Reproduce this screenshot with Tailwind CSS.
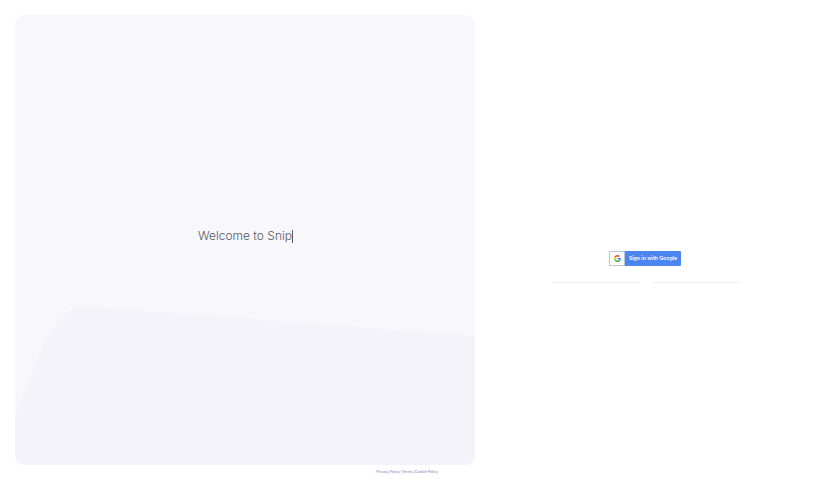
<!DOCTYPE html>
<html lang="en">
<head>
  <meta charset="UTF-8" />
  <meta name="viewport" content="width=device-width, initial-scale=1.0" />
  <title>Snip</title>
  <script src="https://cdn.jsdelivr.net/npm/@tailwindcss/browser@4"></script>
</head>
<body class="bg-white font-['Inter',sans-serif] overflow-hidden">
  <div class="flex h-[480px] w-[815px]">
    <!-- left panel -->
    <div class="w-[475px] shrink-0 pl-[15px] pt-[15px]">
      <div class="relative h-[450px] w-[460px] overflow-hidden rounded-[9px] bg-[#f8f8fc]">
        <svg class="absolute inset-0" width="460" height="450" viewBox="0 0 460 450" fill="none">
          <path d="M0 402 C10 375 20 348 28 332 C35 318 42 307 50 299 C57 292 66 291 78 292 L460 321 L460 450 L0 450 Z" fill="#f3f3f9" />
        </svg>
        <div class="relative flex h-full items-start pl-[183px] pt-[214px]">
          <span class="text-[12px] font-light leading-[14px] text-[#565761]">Welcome to Snip</span>
          <span class="mt-px h-[13px] w-px bg-[#565761]"></span>
        </div>
      </div>
      <div class="mt-[5px] flex justify-end gap-[1px] pr-[37px] text-[3.6px] leading-[5px] text-[#7c7db5]">
        <a href="#">Privacy Policy</a>
        <a href="#">|Terms</a>
        <a href="#">|Cookie Policy</a>
      </div>
    </div>

    <!-- right panel -->
    <div class="flex flex-1 flex-col items-center pt-[251px]">
      <button type="button" class="flex h-[15px] w-[72px] items-center rounded-[1px] bg-[#4a86f0]">
        <span class="flex h-[15px] w-[16px] items-center justify-center rounded-l-[1px] border border-[#b9c6de] bg-white">
          <svg width="7" height="7" viewBox="0 0 48 48">
            <path fill="#EA4335" d="M24 9.500c3.500 0 6.700 1.200 9.200 3.600l6.900-6.900C35.900 2.400 30.500 0 24 0 14.600 0 6.500 5.400 2.600 13.200l8 6.200C12.500 13.700 17.800 9.500 24 9.500z" />
            <path fill="#4285F4" d="M46.900 24.500c0-1.600-.1-3.100-.4-4.500H24v9h12.900c-.6 3-2.200 5.500-4.700 7.200l7.700 6c4.500-4.200 7-10.300 7-17.700z" />
            <path fill="#FBBC05" d="M10.600 28.600c-.5-1.400-.8-3-.8-4.600s.3-3.200.8-4.600l-8-6.200C.9 16.500 0 20.100 0 24s.9 7.500 2.600 10.800l8-6.200z" />
            <path fill="#34A853" d="M24 48c6.500 0 11.900-2.100 15.900-5.800l-7.700-6c-2.200 1.400-4.900 2.300-8.200 2.300-6.200 0-11.500-4.200-13.400-9.900l-8 6.200C6.500 42.600 14.600 48 24 48z" />
          </svg>
        </span>
        <span class="flex-1 text-center text-[5.2px] font-semibold leading-[13px] text-white">Sign in with Google</span>
      </button>
      <div class="mt-[15.500px] flex w-[187px] justify-between">
        <div class="h-px w-[87px] bg-[#f0f0f0]"></div>
        <div class="h-px w-[87px] bg-[#f0f0f0]"></div>
      </div>
    </div>
  </div>
</body>
</html>
